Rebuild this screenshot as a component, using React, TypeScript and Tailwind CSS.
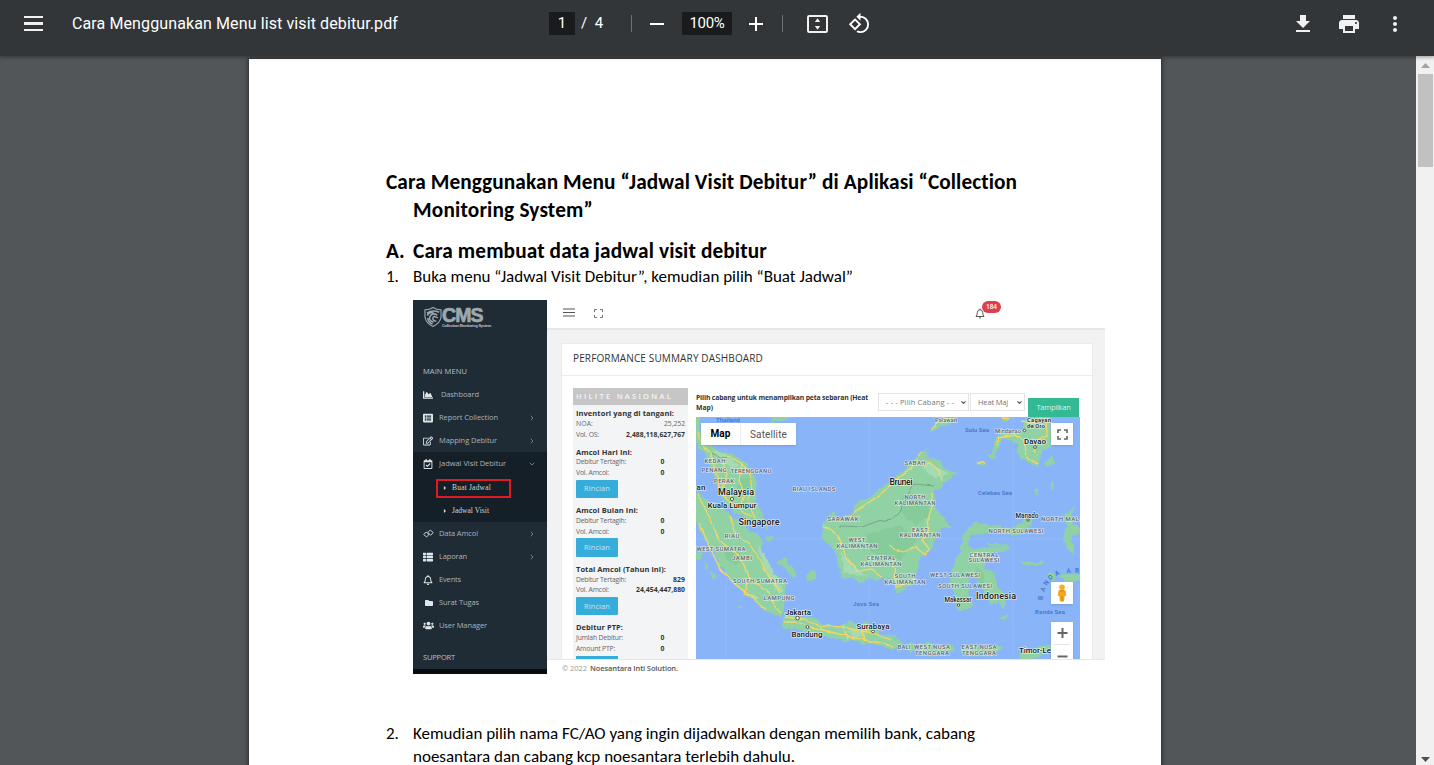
import { useLayoutEffect, useRef, useState, type ReactNode } from "react";
import {
  FaChartArea,
  FaListAlt,
  FaRegEdit,
  FaRegCalendarCheck,
  FaThList,
  FaRegBell,
  FaFolder,
  FaUsers,
  FaCaretRight,
} from "react-icons/fa";
import {
  MdAdd,
  MdMoreVert,
  MdPrint,
  MdRemove,
  MdRotate90DegreesCcw,
} from "react-icons/md";
import { ChevronDown, ChevronRight } from "lucide-react";

/** One line of text, tracked so that it fills exactly `w` pixels. */
function Fit({ w, className = "", children }: { w: number; className?: string; children: string }) {
  const ref = useRef<HTMLSpanElement>(null);
  const [spacing, setSpacing] = useState(0);
  useLayoutEffect(() => {
    const el = ref.current;
    if (!el) return;
    const natural = el.getBoundingClientRect().width - spacing * children.length;
    setSpacing((w - natural) / children.length);
  }, [w, children]);
  return (
    <span ref={ref} className={"inline-block shrink-0 whitespace-pre " + className} style={{ letterSpacing: spacing }}>
      {children}
    </span>
  );
}

function Toolbar() {
  return (
    <header className="relative z-10 flex h-14 shrink-0 items-start bg-[#323639] font-['Roboto','Liberation_Sans',sans-serif] text-[#f1f1f1] shadow-[0_0_4px_1px_rgba(0,0,0,0.4)]">
      <div className="flex h-[47px] w-[549px] items-center pl-6">
        <div className="mr-[29px] flex w-[19px] flex-col gap-1">
          <i className="h-[2.4px] bg-[#f1f1f1]" />
          <i className="h-[2.4px] bg-[#f1f1f1]" />
          <i className="h-[2.4px] bg-[#f1f1f1]" />
        </div>
        <Fit w={326} className="text-base leading-6 text-white">
          Cara Menggunakan Menu list visit debitur.pdf
        </Fit>
      </div>
      <div className="flex h-[47px] items-center text-base text-white">
        <span className="flex h-[23px] w-[26px] items-center justify-center bg-[#191b1c] text-[15px]">1</span>
        <span className="ml-[6px] w-[50px] whitespace-pre text-[15px]">/  4</span>
        <span className="h-[17px] w-px bg-[#6f7274]" />
        <MdRemove className="ml-[13px] size-6" />
        <span className="ml-[13px] flex h-[23px] w-[50px] items-center justify-center bg-[#191b1c] text-[15px]">
          <Fit w={35}>100%</Fit>
        </span>
        <MdAdd className="ml-3 size-6" />
        <span className="ml-[14px] h-[17px] w-px bg-[#6f7274]" />
        <svg viewBox="0 0 21 18" className="ml-6 h-[18px] w-[21px]" fill="none">
          <rect x="1" y="1" width="19" height="16" rx="1.2" stroke="#f1f1f1" strokeWidth="2" />
          <path d="M10.5 3.2 13.2 7H7.8zM10.5 14.8 13.2 11H7.8z" fill="#f1f1f1" />
        </svg>
        <MdRotate90DegreesCcw className="ml-5 size-[23px]" />
      </div>
      <div className="ml-auto flex h-[47px] items-center gap-[22px] pr-[27px]">
        <svg viewBox="0 0 24 24" className="size-6" fill="currentColor">
          <path d="M19 9h-4V3H9v6H5l7 7 7-7zM5 18v2h14v-2H5z" />
        </svg>
        <MdPrint className="size-6" />
        <MdMoreVert className="size-6" />
      </div>
    </header>
  );
}

function Scrollbar() {
  return (
    <div className="flex w-[18px] shrink-0 flex-col items-center bg-[#f1f1f1] pl-px">
      <svg viewBox="0 0 18 18" className="h-[18px] w-[18px]">
        <path d="M4 12h9L8.500 7z" fill="#a3a3a3" />
      </svg>
      <div className="h-[93px] w-[15px] bg-[#c1c1c1]" />
      <svg viewBox="0 0 18 18" className="mt-auto h-[18px] w-[18px]">
        <path d="M4 10h9L8.500 15z" fill="#505050" />
      </svg>
    </div>
  );
}

type MenuEntry = { icon: ReactNode; label: string; w: number; more?: boolean };

function MenuRow({ icon, label, w, more, open }: MenuEntry & { open?: boolean }) {
  return (
    <div className="flex h-[23px] items-center pl-2.5 pr-[11px] text-[7.5px] text-[#a9b3ba]">
      <span className="flex w-4 text-[10px] text-[#dfe5e8]">{icon}</span>
      <Fit w={w}>{label}</Fit>
      {more && (
        <span className="ml-auto">
          {open ? <ChevronDown size={8} strokeWidth={1.8} /> : <ChevronRight size={8} strokeWidth={1.8} />}
        </span>
      )}
    </div>
  );
}

function LinkedSquares() {
  return (
    <svg viewBox="0 0 11 9" className="h-[9px] w-[11px]" fill="none" stroke="currentColor" strokeWidth=".900" strokeLinejoin="round">
      <path d="M.700 5.500 3.200 3 6 5.500 3.600 8zM4.800 3.500 7.300 1 10.200 3.600 7.700 6.200z" />
    </svg>
  );
}

function Logo() {
  return (
    <div className="flex h-[60px] items-start pl-[11px] pt-1.5 text-[#9ea7ad]">
      <svg viewBox="0 0 19 22" className="h-[22px] w-[18px]" fill="none" stroke="currentColor">
        <path d="M1 3.500Q6 3.500 9.500 1 13 3.500 18 3.500V11Q17 17.500 9.500 21 2 17.500 1 11z" strokeWidth="1.200" />
        <path d="M3 7Q9 3 16 6M3.500 9.500Q5 5.500 10 6.500M14 9Q9 6 6.500 10T10 16.500M14.500 12Q10 9 9.500 12T13 15.500M4 12Q4 16 9 18.500" strokeWidth="1.600" />
      </svg>
      <div className="flex flex-col gap-px">
        <Fit w={51} className="h-[17px] font-['Liberation_Sans',sans-serif] text-[19.5px] font-black leading-[18px] [-webkit-text-stroke:0.7px_#9ea7ad]">
          CMS
        </Fit>
        <Fit w={49} className="h-[4px] font-['Liberation_Sans',sans-serif] text-[3.8px] font-bold leading-[4px] text-[#c3cace]">
          Collection Monitoring System
        </Fit>
      </div>
    </div>
  );
}

function Sidebar() {
  return (
    <aside className="flex w-[134px] shrink-0 flex-col bg-[#1f2c36]">
      <Logo />
      <div className="flex h-[23px] items-center pl-2.5 text-[7.5px] text-[#b7c0c6]">
        <Fit w={44}>MAIN MENU</Fit>
      </div>
      <MenuRow icon={<FaChartArea />} label=" Dashboard" w={40} />
      <MenuRow icon={<FaListAlt />} label="Report Collection" w={59} more />
      <MenuRow icon={<FaRegEdit />} label="Mapping Debitur" w={58} more />
      <div className="h-[70px] bg-[#151f27]">
        <MenuRow icon={<FaRegCalendarCheck />} label="Jadwal Visit Debitur" w={67} more open />
        <div className="flex h-[23px] items-center pl-[23px] font-['Liberation_Serif',serif] text-[7.5px] text-[#d0d5d8]">
          <div className="mt-[3px] flex h-[19px] w-[75px] shrink-0 items-center border-[2.5px] border-[#e01b24] pb-px pl-1">
            <FaCaretRight className="mr-[4px] size-[6px]" />
            <Fit w={39}>Buat Jadwal</Fit>
          </div>
        </div>
        <div className="flex h-6 items-center pl-[29px] pt-px font-['Liberation_Serif',serif] text-[7.5px] text-[#d0d5d8]">
          <FaCaretRight className="mr-[4px] size-[6px]" />
          <Fit w={37}>Jadwal Visit</Fit>
        </div>
      </div>
      <MenuRow icon={<LinkedSquares />} label="Data Amcol" w={39} more />
      <MenuRow icon={<FaThList />} label="Laporan" w={28} more />
      <MenuRow icon={<FaRegBell />} label="Events" w={22} />
      <MenuRow icon={<FaFolder className="ml-0.5 size-2" />} label="Surat Tugas" w={40} />
      <MenuRow icon={<FaUsers className="size-[11px]" />} label="User Manager" w={48} />
      <div className="mt-[9px] flex h-[23px] items-center pl-2.5 text-[7.5px] text-[#b7c0c6]">
        <Fit w={32}>SUPPORT</Fit>
      </div>
      <div className="mt-auto h-[5px] bg-[#080c0f]" />
    </aside>
  );
}

type Stat = { label: string; lw: number; value: string; vw: number; light?: boolean; center?: boolean };

function StatRow({ label, lw, value, vw, light, center }: Stat) {
  return (
    <div className={"flex h-[10.9px] items-center justify-between text-[6.8px] text-[#666] " + (center ? "pr-[23px]" : "pr-[3px]")}>
      <Fit w={lw}>{label}</Fit>
      <Fit w={vw} className={light ? "" : "font-bold text-[#333]"}>
        {value}
      </Fit>
    </div>
  );
}

function StatGroup({ title, tw, rows, button }: { title: string; tw: number; rows: Stat[]; button?: boolean }) {
  return (
    <section className={button ? "flex h-[58.6px] shrink-0 flex-col" : "flex h-[38.5px] shrink-0 flex-col"}>
      <Fit w={tw} className="h-[10.500px] self-start text-[7.5px] font-bold leading-[10.500px] text-[#333]">
        {title}
      </Fit>
      {rows.map((r) => (
        <StatRow key={r.label} {...r} />
      ))}
      {button && (
        <div className="mt-px flex h-[18.5px] w-[42px] items-center justify-center rounded-[1px] bg-[#35acd9] text-[7.5px] text-[#c5e7f4]">
          <Fit w={26}>Rincian</Fit>
        </div>
      )}
    </section>
  );
}

function StatsPanel() {
  const tracked = (v: string, w: number, center: boolean): Stat[] => [
    { label: "Debitur Tertagih:", lw: 50, value: center ? "0" : "829", vw: center ? 4.5 : 12, center },
    { label: "Vol. Amcol:", lw: 33, value: v, vw: w, center },
  ];
  return (
    <div className="flex h-[271px] w-[115px] shrink-0 flex-col overflow-hidden bg-[#f2f4f6]">
      <div className="flex h-[16.500px] shrink-0 items-center bg-[#c6c6c6] pl-[3px] text-[7.5px] font-semibold text-[#f5f5f5]">
        <Fit w={97}>HILITE NASIONAL</Fit>
      </div>
      <div className="flex flex-col pl-[3px] pt-[3.500px]">
        <StatGroup
          title="Inventori yang di tangani:"
          tw={98}
          rows={[
            { label: "NOA:", lw: 17, value: "25,252", vw: 21, light: true },
            { label: "Vol. OS:", lw: 23, value: "2,488,118,627,767", vw: 59 },
          ]}
        />
        <StatGroup title="Amcol Hari Ini:" tw={56} rows={tracked("0", 4.5, true)} button />
        <StatGroup title="Amcol Bulan Ini:" tw={62} rows={tracked("0", 4.5, true)} button />
        <StatGroup title="Total Amcol (Tahun ini):" tw={90} rows={tracked("24,454,447,880", 49, false)} button />
        <StatGroup
          title="Debitur PTP:"
          tw={47}
          rows={[
            { label: "Jumlah Debitur:", lw: 47, value: "0", vw: 4.5, center: true },
            { label: "Amount PTP:", lw: 39, value: "0", vw: 4.5, center: true },
          ]}
        />
        <div className="-mt-[4.500px] h-[18px] w-[42px] shrink-0 bg-[#35acd9]" />
      </div>
    </div>
  );
}

const land = [
  // Malay peninsula and the mainland tip
  "M696 417V442L700 449 705 452 710 465 715 477 719 492 728 507 743 516 757 522 763 521 761 512 755 500 756 483 752 472 747 465 740 460 734 454 728 454 718 451 710 445 703 437 698 425 701 417z",
  "M774 417L771 424 778 420 786 420 790 417z",
  // Sumatra
  "M696 491L703 498 710 503 718 506 727 512 733 519 743 524 749 532 757 534 763 542 758 549 764 556 769 566 774 574 780 578 785 583 784 596 784 607 781 617 776 613 768 612 759 605 753 600 744 591 737 587 731 579 727 573 720 566 717 558 710 545 703 536 696 523z",
  "M777 563L781 560 785 558 788 566 793 569 796 574 793 579 789 573 785 567z",
  "M807 575L810 571 815 573 816 578 811 581 807 580z",
  "M697 552L701 554 700 561 696 557zM705 563L708 566 706 569zM711 571L716 577 713 579zM763 524L769 526 767 530zM766 536L774 538 768 542zM738 606L742 608 739 609z",
  // Java and the lesser Sunda islands
  "M785 613L782 627 797 628 813 634 830 637 843 640 855 641 863 643 879 644 893 650 897 644 895 638 883 636 878 630 870 628 868 622 857 625 850 621 843 624 841 630 834 626 823 626 814 618 803 617 797 615 790 616z",
  "M893 641L899 640 905 646 899 650zM907 645L912 642 916 646 912 653zM919 645L930 643 938 647 952 645 954 651 938 652 930 656 921 653zM961 649L972 645 983 649 996 645 1002 648 993 654 976 656 963 653zM1020 655L1034 649 1050 645 1056 648 1040 656 1030 659H1020zM888 635L896 636 890 637z",
  // Borneo
  "M823 525L828 517 832 513 839 519 847 516 854 515 854 508 858 501 870 499 880 489 892 481 900 474 907 468 915 460 921 452 927 451 927 459 937 459 944 469 956 473 948 480 942 483 941 488 933 491 934 505 941 516 952 527 940 528 935 535 932 548 920 558 917 568 915 577 916 584 906 588 898 592 895 584 889 578 883 577 876 580 867 577 864 583 857 581 853 577 842 578 838 565 837 553 830 546 823 537z",
  // Sulawesi
  "M961 551L963 536 968 528 977 522 985 526 999 527 1011 529 1021 523 1031 517 1032 522 1024 531 1014 535 997 532 980 533 970 533 968 543 972 550 985 548 998 547 1006 545 1011 548 1004 552 995 551 983 558 986 569 995 574 997 587 1005 597 1004 608 998 601 991 604 985 593 979 586 977 577 969 574 969 594 973 606 960 611 956 605 957 597 950 583 953 571 957 557z",
  // Palawan and Mindanao
  "M930 432L936 424 945 418 957 417 950 423 940 427zM992 456L995 442 1000 434 1009 434 1018 431 1023 429 1025 421 1030 417H1048L1051 430 1050 447 1046 451 1041 448 1040 457 1038 467 1031 462 1024 459 1017 453 1018 443 1010 440 1002 438 998 449z",
  "M976 462H986L984 465 977 464zM989 454L994 453 994 459 989 457zM1000 417H1013L1006 422z",
  // Halmahera and the Banda islands
  "M1075 506L1065 515 1063 521 1069 525 1063 536 1068 549 1075 554 1072 543 1070 535 1080 532V527L1071 525 1075 518 1070 516z",
  "M1022 561L1033 563 1044 562 1042 564 1024 565zM1050 572L1055 575 1053 580 1048 577zM1060 576L1080 574V580L1065 581zM1050 483L1053 481 1052 489zM1034 492L1038 489 1037 495zM987 543L1001 545 990 546zM1045 462L1052 456 1055 463 1047 466zM999 618L1009 615 1005 620z",
];

const roads = [
  "M698 432L702 444 710 453 714 466 718 480 722 495 733 505 747 514 758 519M728 456L741 463 750 473 752 492 747 500 755 517M742 463L739 480 744 495 739 508M722 460L727 475 723 487 734 501",
  "M698 495L711 520 719 540 735 553 745 565 750 580 767 590 774 606 781 613M730 515L736 535 748 542 758 557 768 575 780 591M699 523L710 547 720 569 735 584 749 595 766 609M747 583L744 594 758 598",
  "M783 622L797 622 806 626 820 629 842 635 861 639 893 646M785 617L804 619 820 626 843 627 862 631 873 633 891 640M843 625L847 639M862 630L864 642",
  "M823 526L832 530 840 540 846 557 858 571 872 569 882 577M848 519L860 508 877 497 894 482 912 468 922 453M913 464L931 464 939 470 941 481M931 493L932 507 927 521 929 530 922 540 930 550 924 555 916 547 902 552 889 546M895 565L896 588 914 579",
  "M996 446L1000 437 1014 434 1024 440 1027 457 1037 465M1021 421L1035 423 1046 421 1047 436 1037 440 1034 452M931 429L942 421 953 418M977 463H985M1001 418L1009 419",
];

const borders = "M708 452L720 457 733 458M840 526L862 527 878 521 893 519 900 512 909 493 914 484 934 486";

type Label = [text: string, cx: number, cy: number, w: number, size: number, kind: "city" | "area" | "sea"];
const labels: Label[] = [
  ["Thailand", 728, 419.5, 24, 6, "sea"],
  ["KEDAH", 715, 461, 21, 6, "area"],
  ["PENANG", 714, 470, 25, 6, "area"],
  ["TERENGGANU", 751, 471, 41, 6, "area"],
  ["PERAK", 724, 480.5, 20, 6, "area"],
  ["an", 701, 487, 9, 8, "city"],
  ["Malaysia", 736, 492, 36, 9, "city"],
  ["Kuala Lumpur", 732, 505.5, 49, 8, "city"],
  ["Singapore", 759, 522, 41, 9, "city"],
  ["RIAU ISLANDS", 814, 488.5, 43, 6, "area"],
  ["RIAU", 732, 535.5, 15, 6, "area"],
  ["WEST SUMATRA", 721, 548.5, 49, 6, "area"],
  ["JAMBI", 742, 558, 20, 6, "area"],
  ["SOUTH SUMATRA", 760, 581, 54, 6, "area"],
  ["LAMPUNG", 779, 597.5, 31, 6, "area"],
  ["Jakarta", 798, 612, 26, 8, "city"],
  ["Bandung", 807, 634, 31, 8, "city"],
  ["Surabaya", 873, 626, 33, 8, "city"],
  ["Java Sea", 866, 604, 26, 6, "sea"],
  ["SARAWAK", 843, 519, 31, 6, "area"],
  ["WEST", 857, 540, 17, 6, "area"],
  ["KALIMANTAN", 857, 545.5, 41, 6, "area"],
  ["CENTRAL", 881, 558, 29, 6, "area"],
  ["KALIMANTAN", 881, 563.5, 41, 6, "area"],
  ["Palawan", 946, 419.5, 22, 6, "area"],
  ["Sulu Sea", 977, 430, 24, 6, "sea"],
  ["Mindanao", 1008, 430.5, 26, 6, "area"],
  ["Cagayan", 1039, 420, 24, 6, "city"],
  ["de Oro", 1036, 426, 18, 6, "city"],
  ["Davao", 1035, 441, 22, 8, "city"],
  ["SABAH", 915, 462.5, 21, 6, "area"],
  ["Brunei", 901, 481.5, 23, 9, "city"],
  ["NORTH", 915, 497, 21, 6, "area"],
  ["KALIMANTAN", 915, 502.5, 41, 6, "area"],
  ["EAST", 920, 529.5, 16, 6, "area"],
  ["KALIMANTAN", 920, 535, 41, 6, "area"],
  ["SOUTH", 905, 576, 21, 6, "area"],
  ["KALIMANTAN", 905, 581.5, 41, 6, "area"],
  ["Celebes Sea", 995, 493, 34, 6, "sea"],
  ["Manado", 1027, 515.5, 23, 6.5, "city"],
  ["NORTH MAL", 1060, 519, 38, 6, "area"],
  ["NORTH SULAWESI", 1016, 531, 55, 6, "area"],
  ["CENTRAL", 984, 554.5, 29, 6, "area"],
  ["SULAWESI", 984, 560, 31, 6, "area"],
  ["WEST SULAWESI", 955, 575, 50, 6, "area"],
  ["SOUTH SULAWESI", 965, 586, 54, 6, "area"],
  ["Makassar", 958, 600, 27, 6.5, "city"],
  ["Indonesia", 996, 595.5, 40, 9, "city"],
  ["Banda Sea", 1050, 612, 30, 6, "sea"],
  ["BALI", 904, 647, 13, 6, "area"],
  ["WEST NUSA", 932, 647, 36, 6, "area"],
  ["TENGGARA", 932, 652.5, 34, 6, "area"],
  ["EAST NUSA", 979, 647, 35, 6, "area"],
  ["TENGGARA", 979, 652.5, 34, 6, "area"],
  ["Timor-Le", 1035, 650, 32, 8, "city"],
];

const labelClass = {
  city: "fill-[#222] stroke-white/80 font-semibold",
  area: "fill-[#55606a] stroke-white/70 font-medium",
  sea: "fill-[#3f72c8] stroke-none font-medium",
};

const arcLetters: [string, number, number, number][] = [
  ["B", 1043, 598, -90],
  ["A", 1045, 590, -75],
  ["N", 1048, 584, -55],
  ["D", 1052, 579, -40],
  ["A", 1058, 575, -25],
  ["A", 1069, 573, -5],
  ["R", 1077, 573, 0],
];

const towns: [number, number, number][] = [
  [732, 499, 1.6],
  [797.5, 618, 1.8],
  [807.5, 627, 1.4],
  [873, 631.5, 1.4],
  [1035, 447, 1.4],
  [1024.5, 430.5, 1.2],
  [1028, 520, 1.2],
  [958.5, 605, 1.2],
];

function MapView() {
  return (
    <div className="relative h-[242px] w-[384px] overflow-hidden">
      <svg viewBox="696 417 384 242" className="h-[242px] w-[384px] font-['Roboto',sans-serif]">
        <defs>
          <filter id="coast" x="-5%" y="-5%" width="110%" height="110%">
            <feTurbulence type="fractalNoise" baseFrequency=".18" numOctaves="2" seed="4" />
            <feDisplacementMap in="SourceGraphic" scale="5" xChannelSelector="R" yChannelSelector="G" />
          </filter>
          <filter id="bend" x="-5%" y="-5%" width="110%" height="110%">
            <feTurbulence type="fractalNoise" baseFrequency=".12" numOctaves="1" seed="9" />
            <feDisplacementMap in="SourceGraphic" scale="4" xChannelSelector="R" yChannelSelector="G" />
          </filter>
        </defs>
        <rect x="696" y="417" width="384" height="242" fill="#8ab4f8" />
        <path d="M726 417V659M869 417V659M1013 417V659M696 539H1080" stroke="#9bbff9" strokeWidth=".500" />
        <g filter="url(#coast)">
          {land.map((d) => (
            <path key={d} d={d} fill="#91d2a5" stroke="#91d2a5" strokeWidth="1" strokeLinejoin="round" />
          ))}
          <path
            d="M740 478L750 477 752 490 744 495 737 489zM726 545L738 548 742 560 735 566 724 557zM903 496L925 498 931 515 915 525 900 512zM865 535L900 525 917 541 900 560 870 552zM975 567L984 573 985 590 978 581z"
            fill="#86cc9b"
          />
          <path
            d="M712 450L727 455 740 466 733 468 718 461zM757 545L762 550 771 567 782 588 781 596 769 580zM925 460L942 470 950 474 935 477 922 469zM840 550L844 573 868 576 855 568 847 560zM846 631L857 628 867 635 858 637z"
            fill="#a5dbb2"
          />
        </g>
        <g filter="url(#bend)">
          <path d={borders} fill="none" stroke="#6f8f7c" strokeWidth=".700" />
          {roads.map((d) => (
            <path key={d} d={d} fill="none" stroke="#f5d565" strokeWidth="1.300" strokeLinejoin="round" />
          ))}
        </g>
        {towns.map(([x, y, r]) => (
          <circle key={x} cx={x} cy={y} r={r} fill="#fff" stroke="#444" strokeWidth=".900" />
        ))}
        {labels.map(([text, cx, cy, w, size, kind]) => (
          <text
            key={text + cx + cy}
            x={cx - w / 2}
            y={cy + size * 0.36}
            textLength={w}
            fontSize={size}
            strokeWidth="1.200"
            paintOrder="stroke"
            className={labelClass[kind]}
          >
            {text}
          </text>
        ))}
        {arcLetters.map(([c, x, y, a]) => (
          <text
            key={c + x}
            fontSize="6.500"
            textAnchor="middle"
            transform={`translate(${x} ${y}) rotate(${a})`}
            className="fill-[#3f72c8] font-medium"
          >
            {c}
          </text>
        ))}
      </svg>
      <div className="absolute left-[5px] top-1.5 flex h-[22px] w-[95px] items-center bg-white font-['Roboto',sans-serif] text-[10px] shadow-sm">
        <span className="flex w-[40px] justify-center border-r border-[#eee] font-bold leading-[22px] text-black">
          <Fit w={20}>Map</Fit>
        </span>
        <span className="flex flex-1 justify-center text-[#555]">
          <Fit w={37}>Satellite</Fit>
        </span>
      </div>
      <div className="absolute right-[7px] top-1.5 flex size-[22px] items-center justify-center bg-white shadow-sm">
        <svg viewBox="0 0 11 11" className="size-[11px]" fill="none" stroke="#666" strokeWidth="1.600">
          <path d="M1 4V1H4M7 1H10V4M10 7V10H7M4 10H1V7" />
        </svg>
      </div>
      <div className="absolute right-[7px] top-[165px] flex size-[22px] items-center justify-center bg-white shadow-sm">
        <svg viewBox="0 0 10 18" className="h-[18px] w-2.5">
          <path d="M1.500 6.500Q5 4.500 8.500 6.500L9.300 11.500 7.700 12 7 17.500H3L2.300 12 .700 11.500z" fill="#f2a51f" />
          <circle cx="5" cy="3.300" r="2.800" fill="#f7ad25" />
          <path d="M3 6.500Q5 8 7 6.500M5 12V17" stroke="#c77d11" strokeWidth=".800" fill="none" />
        </svg>
      </div>
      <div className="absolute right-[7px] top-[205px] flex h-[37px] w-[22px] bg-white shadow-sm">
        <svg viewBox="0 0 22 37" className="h-[37px] w-[22px]">
          <path d="M6.500 11H16.500M11.500 6V16M6.500 34.500H16.500" stroke="#666" strokeWidth="2" />
          <path d="M3 22.500H19" stroke="#e6e6e6" />
        </svg>
      </div>
    </div>
  );
}

function Select({ label, w, className }: { label: string; w: number; className: string }) {
  return (
    <div className={"flex h-[18px] items-center justify-between border border-[#e3e3e3] bg-white pr-[1px] text-[7.5px] text-[#777] " + className}>
      <Fit w={w}>{label}</Fit>
      <ChevronDown size={7} strokeWidth={4} className="text-[#555]" />
    </div>
  );
}

function Dashboard() {
  return (
    <div className="flex min-w-0 flex-1 flex-col bg-[#f2f2f2]">
      <div className="flex h-[30px] shrink-0 items-start border-b-2 border-[#e6e6e6] bg-white">
        <svg viewBox="0 0 12 9" className="ml-4 mt-2 h-[9px] w-3" stroke="#555" strokeWidth="1.200">
          <path d="M0 1H12M0 4.500H12M0 8H12" />
        </svg>
        <svg viewBox="0 0 9 9" className="ml-[19px] mt-[9px] size-[9px]" fill="none" stroke="#666" strokeWidth=".900">
          <path d="M.500 3V.500H3M6 .500H8.500V3M8.500 6V8.500H6M3 8.500H.500V6" />
        </svg>
        <div className="relative ml-[372px] mt-2">
          <svg viewBox="0 0 10 11" className="h-[11px] w-2.5" fill="none" stroke="#444" strokeWidth=".900">
            <path d="M1 8.500Q2.300 7.300 2.300 4.500 2.500 1.800 5 1.700 7.500 1.800 7.700 4.500 7.700 7.300 9 8.500zM5 .500V1.700M4 9.700Q5 10.500 6 9.700" />
          </svg>
          <span className="absolute -top-[7px] left-[7px] flex h-[12px] w-[19px] items-center justify-center rounded-full bg-[#dc3f4f] text-[6.5px] font-semibold text-white">
            <Fit w={11}>184</Fit>
          </span>
        </div>
      </div>
      <div className="ml-[14px] mt-[13px] flex h-[316px] w-[532px] shrink-0 flex-col overflow-hidden border border-b-0 border-[#ebebeb] bg-white">
        <div className="flex h-8 shrink-0 items-center border-b border-[#ececec] pb-[3px] pl-[11px] text-[10px] text-[#333]">
          <Fit w={190}>PERFORMANCE SUMMARY DASHBOARD</Fit>
        </div>
        <div className="flex pl-[11px] pt-3">
          <StatsPanel />
          <div className="ml-2 flex w-[384px] flex-col">
            <div className="flex h-[29px] items-start">
              <div className="flex w-[182px] flex-col pt-[5px] text-[6.8px] font-bold leading-[10px] text-[#333]">
                <Fit w={172} className="self-start">Pilih cabang untuk menampilkan peta sebaran (Heat</Fit>
                <Fit w={17} className="self-start">Map)</Fit>
              </div>
              <Select label="- - - Pilih Cabang - -" w={68} className="mt-[5px] w-[91px] pl-[7px] pt-px" />
              <Select label="Heat Maj" w={30} className="ml-[1px] mt-[5px] w-[55px] pl-[7px] pt-px" />
              <div className="ml-[3px] mt-[10px] flex h-[19px] w-[51px] items-center justify-center bg-[#34b995] text-[7.5px] text-[#d7f1ea]">
                <Fit w={34}>Tampilkan</Fit>
              </div>
            </div>
            <MapView />
          </div>
        </div>
      </div>
      <footer className="flex flex-1 items-center gap-[3px] border-t border-[#e6e6e6] bg-white pl-[15px] pt-[3px] text-[7.5px]">
        <Fit w={25} className="text-[#999]">© 2022</Fit>
        <Fit w={88} className="font-semibold text-[#555]">Noesantara Inti Solution.</Fit>
      </footer>
    </div>
  );
}

function Page() {
  return (
    <main className="relative mt-[3px] flex w-[912px] shrink-0 flex-col bg-white pl-[137px] pt-[109px] font-['Carlito','Lato',sans-serif] text-black shadow-[0_0_4px_1px_rgba(0,0,0,0.5)]">
      <h1 className="flex flex-col text-[21.3px] font-bold leading-7">
        <Fit w={631} className="self-start">Cara Menggunakan Menu “Jadwal Visit Debitur” di Aplikasi “Collection</Fit>
        <Fit w={180} className="ml-[27px] self-start">Monitoring System”</Fit>
      </h1>
      <h2 className="mt-[13px] flex text-[21.3px] font-bold leading-7">
        <span className="w-[27px]">A.</span>
        <Fit w={354}>Cara membuat data jadwal visit debitur</Fit>
      </h2>
      <p className="flex h-[23px] text-[17px] leading-[23px]">
        <span className="w-[27px]">1.</span>
        <Fit w={440}>Buka menu “Jadwal Visit Debitur”, kemudian pilih “Buat Jadwal”</Fit>
      </p>
      <div className="ml-[27px] mt-3 flex h-[374px] w-[692px] shrink-0 overflow-hidden font-['Open_Sans','Noto_Sans',sans-serif]">
        <Sidebar />
        <Dashboard />
      </div>
      <div className="mt-12 flex text-[17px] leading-[23px]">
        <span className="w-[27px]">2.</span>
        <div className="flex flex-col items-start">
          <Fit w={562}>Kemudian pilih nama FC/AO yang ingin dijadwalkan dengan memilih bank, cabang</Fit>
          <Fit w={382}>noesantara dan cabang kcp noesantara terlebih dahulu.</Fit>
        </div>
      </div>
    </main>
  );
}

export default function App() {
  return (
    <div className="flex h-[765px] w-[1434px] flex-col overflow-hidden bg-[#525659]">
      <Toolbar />
      <div className="flex min-h-0 flex-1">
        <div className="flex flex-1 items-start overflow-hidden pl-[249px]">
          <Page />
        </div>
        <Scrollbar />
      </div>
    </div>
  );
}
